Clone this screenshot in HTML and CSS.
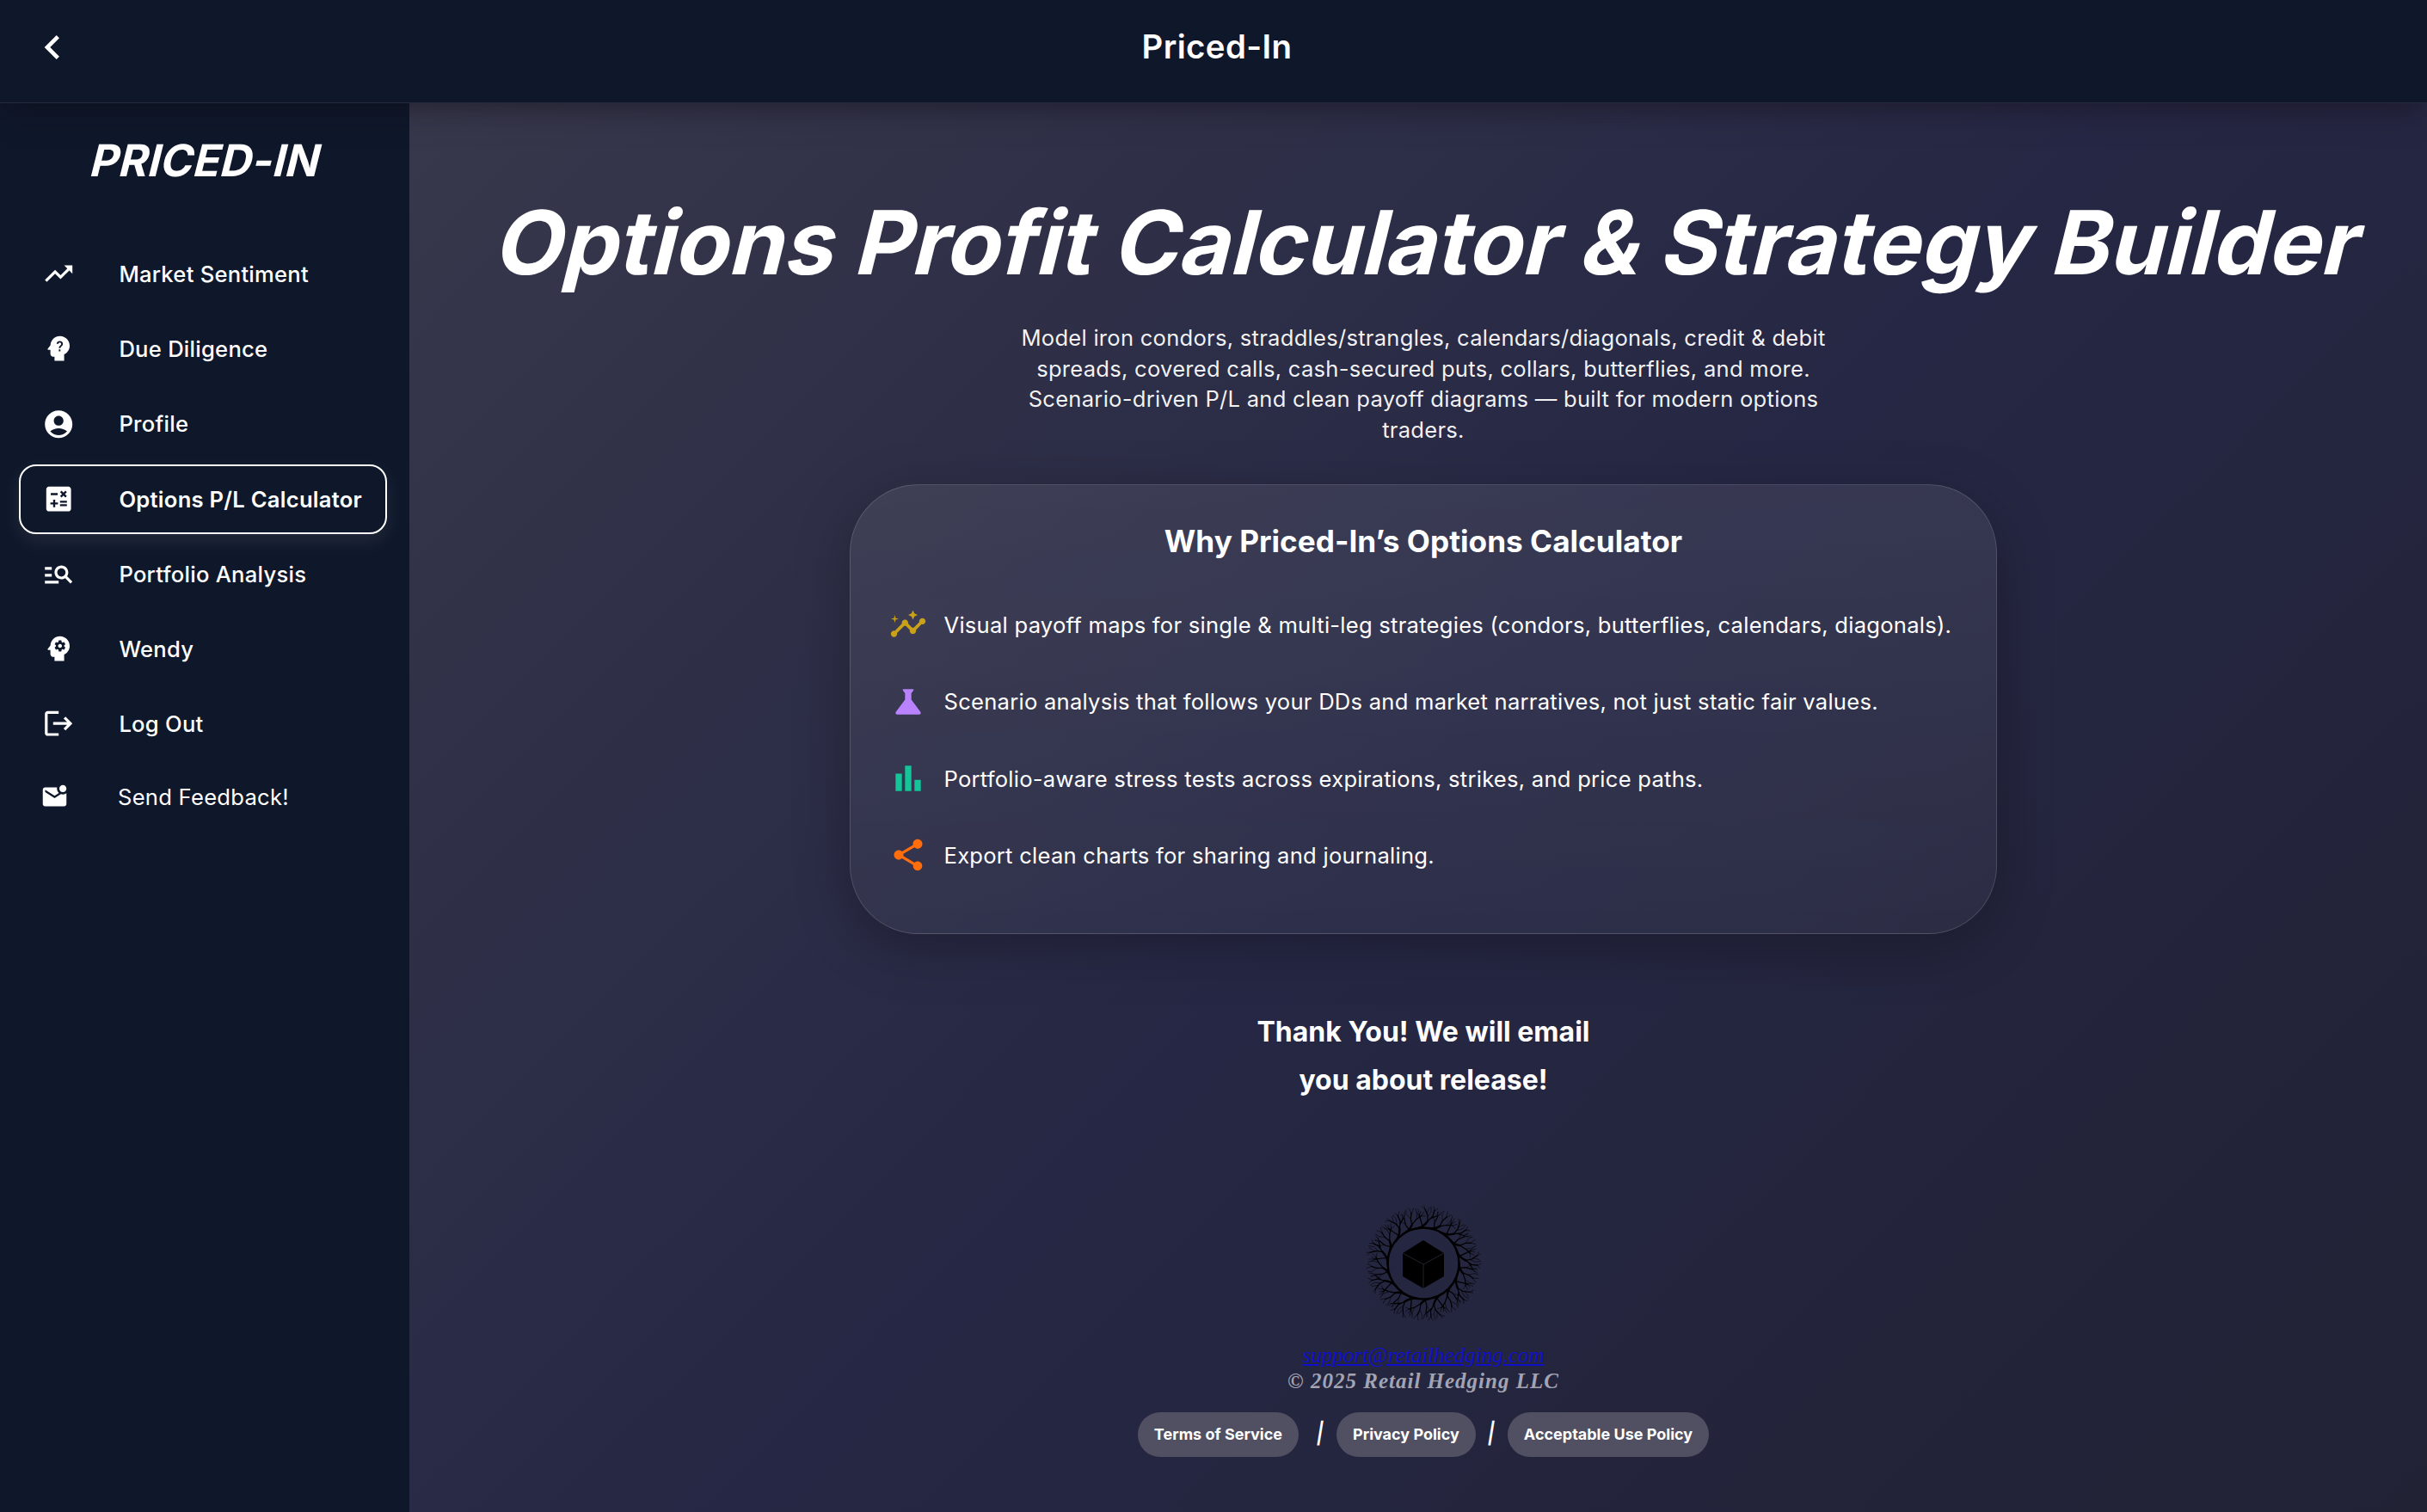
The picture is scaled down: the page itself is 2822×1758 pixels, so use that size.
FILE: index.html
```html
<!DOCTYPE html>
<html lang="en">
<head>
<meta charset="utf-8">
<title>Priced-In</title>
<link rel="stylesheet" href="styles.css">
</head>
<body>
<header class="topbar">
  <svg class="back" viewBox="0 0 24 24"><path d="M15.41 7.41 14 6l-6 6 6 6 1.41-1.41L10.83 12z"/></svg>
  <h1 class="topbar-title">Priced-In</h1>
</header>
<div class="layout">
  <aside class="sidebar">
    <div class="brand"><span class="slant">PRICED-IN</span></div>
    <nav class="nav">
      <a class="nav-item"><svg class="icon" viewBox="0 0 24 24"><path d="m16 6 2.29 2.29-4.88 4.88-4-4L2 16.59 3.41 18l6-6 4 4 6.3-6.29L22 12V6z"/></svg><span>Market Sentiment</span></a>
      <a class="nav-item"><svg class="icon" viewBox="0 0 24 24"><path d="M13 3C9.25 3 6.2 5.94 6.02 9.64L4.1 12.2c-.25.33-.01.8.4.8H6v3c0 1.1.9 2 2 2h1v3h7v-4.68c2.36-1.12 4-3.53 4-6.32 0-3.87-3.13-7-7-7z"/><path class="question" d="M11 8.600c.3-1 .9-1.500 1.700-1.500 1.100 0 1.800.700 1.800 1.600 0 1.400-1.800 1.400-1.800 3M12.700 12.700v1.300"/></svg><span>Due Diligence</span></a>
      <a class="nav-item"><svg class="icon" viewBox="0 0 24 24"><path d="M12 2C6.48 2 2 6.48 2 12s4.48 10 10 10 10-4.48 10-10S17.52 2 12 2zm0 4c1.93 0 3.5 1.57 3.5 3.5S13.93 13 12 13s-3.5-1.57-3.5-3.5S10.07 6 12 6zm0 14c-2.03 0-4.43-.82-6.14-2.88C7.55 15.8 9.68 15 12 15s4.45.8 6.14 2.12C16.43 19.18 14.03 20 12 20z"/></svg><span>Profile</span></a>
      <a class="nav-item active"><svg class="icon" viewBox="0 0 24 24"><path d="M19 3H5c-1.1 0-2 .9-2 2v14c0 1.1.9 2 2 2h14c1.1 0 2-.9 2-2V5c0-1.1-.9-2-2-2zm-5.97 4.06L14.09 6l1.41 1.41L16.91 6l1.06 1.06-1.41 1.41 1.41 1.41-1.06 1.06-1.41-1.4-1.41 1.41-1.06-1.06 1.41-1.41-1.41-1.42zm-6.78.66h5v1.5h-5v-1.5zM11.5 16h-2v2H8v-2H6v-1.5h2v-2h1.5v2h2V16zm6.5 1.25h-5v-1.5h5v1.5zm0-2.5h-5v-1.5h5v1.5z"/></svg><span>Options P/L Calculator</span></a>
      <a class="nav-item"><svg class="icon" viewBox="0 0 24 24"><path d="M7 9H2V7h5v2zm0 3H2v2h5v-2zm13.59 7-3.83-3.83c-.8.52-1.74.83-2.76.83-2.76 0-5-2.24-5-5s2.24-5 5-5 5 2.24 5 5c0 1.02-.31 1.96-.83 2.75L22 17.59 20.59 19zM17 11c0-1.65-1.35-3-3-3s-3 1.35-3 3 1.35 3 3 3 3-1.35 3-3zM2 19h10v-2H2v2z"/></svg><span>Portfolio Analysis</span></a>
      <a class="nav-item"><svg class="icon" viewBox="0 0 24 24"><path d="M13 8.57c-.79 0-1.43.64-1.43 1.43s.64 1.43 1.43 1.43 1.43-.64 1.43-1.43-.64-1.43-1.43-1.43z"/><path d="M13 3C9.25 3 6.2 5.94 6.02 9.64L4.1 12.2c-.25.33-.01.8.4.8H6v3c0 1.1.9 2 2 2h1v3h7v-4.68c2.36-1.12 4-3.53 4-6.32 0-3.87-3.13-7-7-7zm3 7c0 .13-.01.26-.02.39l.83.66c.08.06.1.16.05.25l-.8 1.39c-.05.09-.16.12-.24.09l-.99-.4c-.21.16-.43.29-.67.39L14 13.83c-.01.1-.1.17-.2.17h-1.6c-.1 0-.18-.07-.2-.17l-.15-1.06c-.25-.1-.47-.23-.68-.39l-.99.4c-.09.03-.2 0-.25-.09l-.8-1.39c-.05-.08-.03-.19.05-.25l.84-.66c-.01-.13-.02-.26-.02-.39s.02-.27.04-.39l-.85-.66c-.08-.06-.1-.16-.05-.26l.8-1.38c.05-.09.15-.12.24-.09l1 .4c.2-.15.43-.29.67-.39L12 6.17c.02-.1.1-.17.2-.17h1.6c.1 0 .18.07.2.17l.15 1.06c.24.1.46.23.67.39l1-.4c.09-.03.2 0 .24.09l.8 1.38c.05.09.03.2-.05.26l-.85.66c.03.12.04.25.04.39z"/></svg><span>Wendy</span></a>
      <a class="nav-item"><svg class="icon" viewBox="0 0 24 24"><path d="m17 7-1.41 1.41L18.17 11H8v2h10.17l-2.58 2.58L17 17l5-5zM4 5h8V3H4c-1.1 0-2 .9-2 2v14c0 1.1.9 2 2 2h8v-2H4V5z"/></svg><span>Log Out</span></a>
      <a class="nav-item feedback"><svg class="icon" viewBox="0 0 24 24"><path d="M22 8.98V18c0 1.1-.9 2-2 2H4c-1.1 0-2-.9-2-2V6c0-1.1.9-2 2-2h10.1c-.06.32-.1.66-.1 1 0 1.48.65 2.79 1.67 3.71L12 11 4 6v2l8 5 5.3-3.32c.54.2 1.1.32 1.7.32 1.13 0 2.16-.39 3-1.02zM16 5c0 1.66 1.34 3 3 3s3-1.34 3-3-1.34-3-3-3-3 1.34-3 3z"/></svg><span>Send Feedback!</span></a>
    </nav>
  </aside>
  <main class="main">
    <h2 class="hero"><span class="slant">Options Profit Calculator &amp; Strategy Builder</span></h2>
    <p class="lead">Model iron condors, straddles/strangles, calendars/diagonals, credit &amp; debit<br>spreads, covered calls, cash-secured puts, collars, butterflies, and more.<br>Scenario-driven P/L and clean payoff diagrams — built for modern options<br>traders.</p>
    <section class="card">
      <h3 class="card-title">Why Priced-In’s Options Calculator</h3>
      <ul class="features">
        <li><svg class="gold" viewBox="0 0 24 24"><path d="M21 8c-1.45 0-2.26 1.44-1.93 2.51l-3.55 3.56c-.3-.09-.74-.09-1.04 0l-2.55-2.55C12.27 10.45 11.46 9 10 9c-1.45 0-2.27 1.44-1.93 2.52l-4.56 4.55C2.44 15.74 1 16.55 1 18c0 1.1.9 2 2 2 1.45 0 2.26-1.44 1.93-2.51l4.55-4.56c.3.09.74.09 1.04 0l2.55 2.55C12.73 16.55 13.54 18 15 18c1.45 0 2.27-1.44 1.93-2.52l3.56-3.55C21.56 12.26 23 11.45 23 10c0-1.1-.9-2-2-2z"/><path d="m15 9 .94-2.07L18 6l-2.06-.93L15 3l-.92 2.07L12 6l2.08.93zM3.5 11 4 9l2-.5L4 8l-.5-2L3 8l-2 .5L3 9z"/></svg><span>Visual payoff maps for single &amp; multi-leg strategies (condors, butterflies, calendars, diagonals).</span></li>
        <li><svg class="violet" viewBox="0 0 24 24"><path d="M19.8 18.4 14 10.67V6.5l1.35-1.69c.26-.33.03-.81-.39-.81H9.04c-.42 0-.65.48-.39.81L10 6.5v4.17L4.2 18.4c-.49.66-.02 1.6.8 1.6h14c.82 0 1.29-.94.8-1.6z"/></svg><span>Scenario analysis that follows your DDs and market narratives, not just static fair values.</span></li>
        <li><svg class="green" viewBox="0 0 24 24"><path d="M4 9h4v11H4zm12 4h4v7h-4zm-6-9h4v16h-4z"/></svg><span>Portfolio-aware stress tests across expirations, strikes, and price paths.</span></li>
        <li><svg class="orange" viewBox="0 0 24 24"><path d="M18 16.08c-.76 0-1.44.3-1.96.77L8.91 12.7c.05-.23.09-.46.09-.7s-.04-.47-.09-.7l7.05-4.11c.54.5 1.25.81 2.04.81 1.66 0 3-1.34 3-3s-1.34-3-3-3-3 1.34-3 3c0 .24.04.47.09.7L8.04 9.81C7.5 9.31 6.79 9 6 9c-1.66 0-3 1.34-3 3s1.34 3 3 3c.79 0 1.5-.31 2.04-.81l7.12 4.16c-.05.21-.08.43-.08.65 0 1.61 1.31 2.92 2.92 2.92s2.92-1.31 2.92-2.92-1.31-2.92-2.92-2.92z"/></svg><span>Export clean charts for sharing and journaling.</span></li>
      </ul>
    </section>
    <p class="thanks">Thank You! We will email<br>you about release!</p>
    <footer class="footer">
      <svg class="logo" viewBox="-70 -70 140 140">
        <defs>
          <g id="branch-a">
            <path class="limb" d="M-8-40.500Q0-42 5-49"/>
            <path class="twig" d="M5-49L5-56 2-63M5-49L11-55 13-62M-1-43L-3-50-5-57M8-52L15-55"/>
            <path class="tip" d="M2-63L1-67M4-58L7-65M5-54L9-60 9-66M2-63L-2-66M13-62L12-66M13-61L17-64M-5-57L-6-63M-4-54L-8-60M15-55L20-57M15-55L18-60"/>
          </g>
          <g id="branch-b">
            <path class="limb" d="M-7-41Q-1-42 3-47"/>
            <path class="twig" d="M3-47L4-54 7-60M3-47L10-51 17-53M-2-42L-4-49-3-57"/>
            <path class="tip" d="M7-60L6-66M6-58L11-64M4-54L1-61 2-65M-3-57L-5-62M-3-57L0-64M-4-50L-8-55-9-60M10-51L13-57 13-63M13-52L18-58M17-53L21-56M16-53L21-51"/>
          </g>
        </defs>
        <circle class="ring" r="41.5"/>
        <use href="#branch-a"/><use href="#branch-b" transform="rotate(20)"/><use href="#branch-a" transform="rotate(40)"/><use href="#branch-b" transform="rotate(60)"/><use href="#branch-a" transform="rotate(80)"/><use href="#branch-b" transform="rotate(100)"/><use href="#branch-a" transform="rotate(120)"/><use href="#branch-b" transform="rotate(140)"/><use href="#branch-a" transform="rotate(160)"/><use href="#branch-b" transform="rotate(180)"/><use href="#branch-a" transform="rotate(200)"/><use href="#branch-b" transform="rotate(220)"/><use href="#branch-a" transform="rotate(240)"/><use href="#branch-b" transform="rotate(260)"/><use href="#branch-a" transform="rotate(280)"/><use href="#branch-b" transform="rotate(300)"/><use href="#branch-a" transform="rotate(320)"/><use href="#branch-b" transform="rotate(340)"/>
        <path class="cube" d="M0-27 24-12V15L0 29-24 15V-12z"/>
        <path class="cube-edge" d="M-24-12 0 1 24-12M0 1V29"/>
      </svg>
      <a class="support">support@retailhedging.com</a>
      <p class="copyright">© 2025 Retail Hedging LLC</p>
      <div class="policies">
        <a class="pill">Terms of Service</a><span class="slash wide"><i>/</i></span><a class="pill">Privacy Policy</a><span class="slash"><i>/</i></span><a class="pill">Acceptable Use Policy</a>
      </div>
    </footer>
  </main>
</div>
</body>
</html>
```

FILE: styles.css
```css
* { box-sizing: border-box; }

body {
  margin: 0;
  min-height: 1758px;
  background: #0f172a;
  color: #fff;
  font-family: Inter, sans-serif;
  display: flex;
  flex-direction: column;
}

h1, h2, h3, p, ul { margin: 0; padding: 0; }
svg { fill: currentColor; flex: none; }

.topbar {
  position: relative;
  z-index: 2;
  height: 120px;
  padding: 0 33px 10px;
  display: grid;
  grid-template-columns: 64px 1fr 56px;
  align-items: center;
  background: #0f172a;
  border-bottom: 1px solid #272a3a;
  box-shadow: 0 12px 32px -8px rgba(16, 12, 24, 0.55);
}
.back { width: 56px; height: 56px; }
.topbar-title {
  padding-bottom: 2px;
  text-align: center;
  font-size: 38.4px;
  line-height: 48px;
  font-weight: 600;
  letter-spacing: 0.01em;
}

.layout { flex: 1; display: flex; }

/* Oblique display text, sheared around its baseline */
.slant { display: inline-block; transform: skewX(-14deg); transform-origin: 50% 77%; }

.sidebar { width: 476px; flex: none; }
.brand {
  padding: 34px 3px 0 0;
  text-align: center;
  font-size: 51.2px;
  line-height: 64px;
  font-weight: 700;
  letter-spacing: 0.2px;
}
.nav { margin-top: 60px; padding: 0 26px 0 22px; display: flex; flex-direction: column; gap: 6.2px; }
.nav-item {
  height: 81px;
  padding-left: 25px;
  border: 2px solid transparent;
  border-radius: 20px;
  display: flex;
  align-items: center;
  gap: 51px;
  font-size: 25.6px;
  font-weight: 500;
  letter-spacing: 0.01em;
  white-space: nowrap;
}
.icon { width: 38.4px; height: 38.4px; }
.question { fill: none; stroke: #0f172a; stroke-width: 1.2; }
.active { border-color: #fff; font-weight: 600; box-shadow: 0 8px 24px rgba(255, 255, 255, 0.08); }
.feedback { font-weight: 400; padding-left: 22.5px; gap: 57.5px; height: 77px; }
.feedback .icon { width: 33px; height: 33px; }

.main {
  flex: 1;
  padding: 102px 0 0 12px;
  display: flex;
  flex-direction: column;
  align-items: center;
  text-align: center;
  background: linear-gradient(135deg, #37384b 0%, #262744 50%, #212234 100%);
}
.hero {
  height: 120px;
  padding-left: 1px;
  font-size: 102.9px;
  line-height: 120px;
  font-weight: 700;
  white-space: nowrap;
}
.lead {
  margin-top: 33px;
  font-size: 25.6px;
  line-height: 35.7px;
  letter-spacing: 0.0098em;
  color: rgba(255, 255, 255, 0.94);
}

.card {
  width: 1334px;
  height: 522.5px;
  margin-top: 45.5px;
  padding: 40.5px 45px;
  border: 1px solid rgba(255, 255, 255, 0.14);
  border-radius: 80px;
  background: linear-gradient(180deg, rgba(255, 255, 255, 0.08), rgba(255, 255, 255, 0.04));
  box-shadow: 0 16px 64px rgba(0, 0, 0, 0.25);
}
.card-title { font-size: 35.2px; line-height: 48px; font-weight: 700; }
.features { margin-top: 51.5px; list-style: none; display: flex; flex-direction: column; gap: 45.4px; }
.features li {
  height: 44px;
  display: flex;
  align-items: center;
  gap: 19.5px;
  font-size: 25.6px;
  letter-spacing: 0.0095em;
  white-space: nowrap;
}
.features svg { width: 44px; height: 44px; }
.gold { color: #c9a21a; }
.violet { color: #b983ff; }
.green { color: #14c59a; }
.orange { color: #ff6d0d; }

.thanks { margin-top: 86px; font-size: 32px; line-height: 56px; font-weight: 700; }

.footer { margin-top: 115px; display: flex; flex-direction: column; align-items: center; }
.logo { width: 140px; height: 140px; color: #000; }
.ring { fill: none; stroke: #000; stroke-width: 2.5; }
.limb, .twig, .tip { fill: none; stroke: #000; stroke-linecap: round; stroke-linejoin: round; }
.limb { stroke-width: 2.4; }
.twig { stroke-width: 1.2; }
.tip { stroke-width: 0.5; }
.cube-edge { fill: none; stroke: #2a2a35; stroke-width: 0.8; }

.support, .copyright {
  font-family: Georgia, "Liberation Serif", serif;
  font-style: italic;
  font-size: 25px;
  line-height: 30px;
}
.support { margin-top: 22px; color: #1010cc; text-decoration: underline; }
.copyright { color: #a2a3b3; font-weight: 700; letter-spacing: 1px; }
.policies { margin-top: 21px; display: flex; align-items: center; }
.pill {
  height: 52px;
  padding: 0 19px;
  border-radius: 26px;
  background: #505062;
  font-size: 18px;
  line-height: 52px;
  font-weight: 700;
}
.slash { width: 37px; padding-bottom: 6px; font-size: 33px; }
.slash i { display: inline-block; font-style: normal; transform: skewX(6deg); }
.wide { width: 44px; padding-left: 6px; }
```
